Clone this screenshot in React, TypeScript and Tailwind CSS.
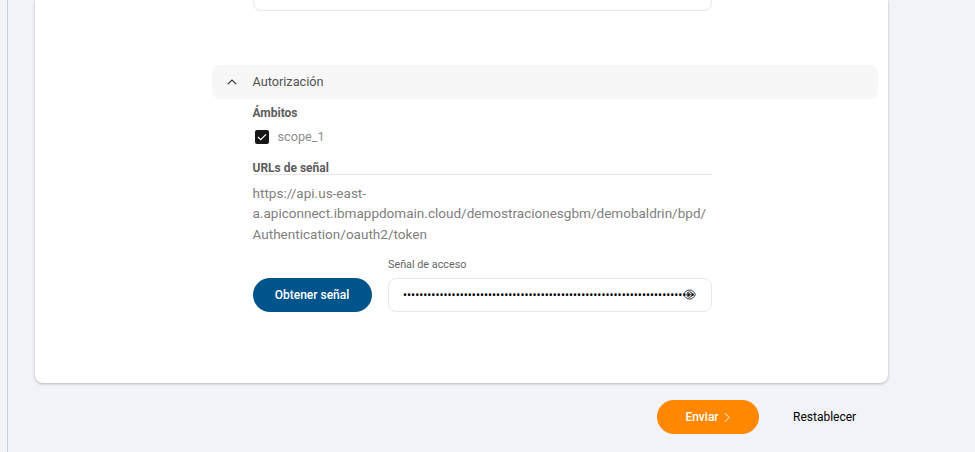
const TOKEN_LENGTH = 72;

function Chevron() {
  return (
    <svg className="h-[6px] w-[10px] shrink-0" viewBox="0 0 10 6" fill="none" stroke="#333" strokeWidth="1.2">
      <path d="M.8 5.2 5 1l4.200 4.200" />
    </svg>
  );
}

function Eye() {
  return (
    <svg className="absolute top-[10.500px] right-[14.500px] h-[11px] w-[13px]" viewBox="0 0 13 11" fill="none" stroke="#333" strokeWidth="1">
      <path d="M.6 5.500C2 2.400 4 1 6.500 1s4.500 1.400 5.900 4.500C11 8.600 9 10 6.500 10S2 8.600.6 5.500Z" />
      <circle cx="6.500" cy="5.500" r="2.700" />
      <circle cx="6.500" cy="5.500" r="0.900" />
    </svg>
  );
}

export default function App() {
  return (
    <div className="flex h-[452px] w-[975px] overflow-hidden bg-[#f2f3f8] font-['Roboto','Liberation_Sans',sans-serif]">
      <div className="w-[8px] shrink-0 border-r border-[#c8d1df] bg-[#f3f4f8]" />
      <main className="ml-[27px] flex w-[853px] flex-col">
        <section className="flex h-[383px] shrink-0 flex-col rounded-b-[8px] bg-white pl-[176.500px] shadow-[0_1px_3px_rgba(0,0,0,0.25)]">
          <div className="ml-[41px] h-[11px] w-[459px] shrink-0 rounded-b-[8px] border border-t-0 border-[#ebe9e4]" />
          <header className="mt-[54px] flex h-[34px] w-[666px] shrink-0 items-center rounded-[8px] bg-[#f7f7f7] pl-[15.500px]">
            <Chevron />
            <h2 className="ml-[15.500px] text-[12.700px] text-[#525252]">Autorización</h2>
          </header>
          <div className="ml-[41px] flex w-[459px] flex-col">
            <h3 className="mt-[5px] h-[18px] text-[12px] leading-[18px] font-bold text-[#5c5c5c]">Ámbitos</h3>
            <label className="mt-[5px] flex h-[20px] items-center pl-[2px] text-[12.700px] text-[#8c8c8c]">
              <span className="mr-[9px] flex size-[14px] items-center justify-center rounded-[2px] bg-[#161616]">
                <svg className="h-[8px] w-[10px]" viewBox="0 0 10 8" fill="none" stroke="white" strokeWidth="1.200">
                  <path d="m1 4 2.700 2.700L9 1.300" />
                </svg>
              </span>
              scope_1
            </label>
            <h3 className="mt-[12px] h-[16px] border-b border-[#e7e7e7] text-[12px] leading-[18px] font-bold text-[#5c5c5c]">URLs de señal</h3>
            <p className="mt-[8px] text-[13.540px] leading-[20.300px] text-[#808080]">
              https://api.us-east-<br />
              a.apiconnect.ibmappdomain.cloud/demostracionesgbm/demobaldrin/bpd/<br />
              Authentication/oauth2/token
            </p>
            <div className="mt-[13px] flex items-end">
              <button className="h-[34px] w-[119px] shrink-0 rounded-full bg-[#00548c] text-[12px] font-medium text-white">Obtener señal</button>
              <div className="ml-[16.500px] flex flex-1 flex-col">
                <span className="mb-[5px] h-[16px] text-[10.800px] leading-[16px] text-[#666]">Señal de acceso</span>
                <div className="relative flex h-[34px] items-center rounded-[8px] border border-[#ebe9e4] pl-[14px]">
                  <span className="text-[12px] leading-[16px] text-black">{"•".repeat(TOKEN_LENGTH)}</span>
                  <Eye />
                </div>
              </div>
            </div>
          </div>
        </section>
        <footer className="mt-[17px] flex items-center pl-[621.500px]">
          <button className="flex h-[34px] w-[102px] items-center justify-center gap-[5px] rounded-full bg-[#ff8800] text-[12px] font-medium text-white">
            Enviar
            <svg className="h-[11px] w-[6px]" viewBox="0 0 6 11" fill="none" stroke="white" strokeWidth="1">
              <path d="m.7 1 4.500 4.500L.7 10" />
            </svg>
          </button>
          <button className="ml-[34.500px] text-[12px] text-black">Restablecer</button>
        </footer>
      </main>
    </div>
  );
}
